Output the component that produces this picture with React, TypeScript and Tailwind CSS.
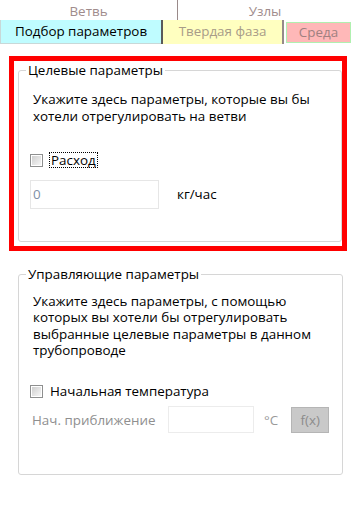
const Checkbox = () => (
    <div className="w-[13px] h-[13px] border border-[#8e8f8f] bg-white p-[1px] shrink-0">
        <div className="w-full h-full bg-gradient-to-br from-[#cfcfcf] to-[#f6f6f6]" />
    </div>
);

const App = () => {
    return (
        <div
            className="w-[352px] h-[507px] bg-white text-[13.4px] text-black overflow-hidden"
            style={{ fontFamily: '"Open Sans", "Noto Sans", sans-serif' }}
        >
            {/* Tabs, upper row */}
            <div className="flex h-[20px] text-[#a08c8c] leading-[22px]">
                <div className="w-[177px] text-center">Ветвь</div>
                <div className="w-[1px] bg-[#9a8a8a]" />
                <div className="flex-1 text-center">Узлы</div>
            </div>

            {/* Tabs, lower row */}
            <div className="flex h-[24px] leading-[22px]">
                <div className="w-[161px] bg-[#bffcff] border-l border-b border-[#c8d8d8] text-center text-black">
                    Подбор параметров
                </div>
                <div className="w-[2px] bg-[#5a5a5a]" />
                <div className="w-[119px] bg-[#ffffc0] text-center text-[#a89c88]">Твердая фаза</div>
                <div className="w-[2px] bg-[#968a8a]" />
                <div className="w-[2px]" />
                <div className="w-[65px] my-[2px] mb-[1px] bg-[#ffb8b8] border border-[#b0f0b0] text-center text-[#a08080] leading-[19px]">
                    Среда
                </div>
            </div>

            {/* Target parameters, highlighted */}
            <div className="mt-[12px] ml-[9px] w-[338px] h-[195px] border-[5px] border-[#ff0000] pl-[4px] pt-[1px]">
                <fieldset className="border border-[#d6d6d6] rounded-[3px] w-[324px] h-[180px] p-0 m-0 min-w-0">
                    <legend className="ml-[7px] px-[2px] leading-[16px]">Целевые параметры</legend>
                    <div className="px-[11px] pt-[13px]">
                        <p className="pl-[3px] leading-[16.5px]">
                            Укажите здесь параметры, которые вы бы
                            <br />
                            хотели отрегулировать на ветви
                        </p>
                        <div className="flex items-center mt-[28px] h-[16px] gap-[6px]">
                            <Checkbox />
                            <span className="border border-dotted border-black px-[1px] leading-[14px]">Расход</span>
                        </div>
                        <div className="flex items-center mt-[12px]">
                            <div className="w-[129px] h-[29px] border border-[#e6e6e6] px-[2px] pt-[3px] text-[#7f8fa6]">
                                0
                            </div>
                            <span className="ml-[18px]">кг/час</span>
                        </div>
                    </div>
                </fieldset>
            </div>

            {/* Control parameters */}
            <fieldset className="mt-[15px] ml-[18px] border border-[#d6d6d6] rounded-[3px] w-[325px] h-[209px] p-0 min-w-0">
                <legend className="ml-[7px] px-[2px] leading-[16px]">Управляющие параметры</legend>
                <div className="px-[11px] pt-[11px]">
                    <p className="pl-[3px] leading-[16.3px]">
                        Укажите здесь параметры, с помощью
                        <br />
                        которых вы хотели бы отрегулировать
                        <br />
                        выбранные целевые параметры в данном
                        <br />
                        трубопроводе
                    </p>
                    <div className="flex items-center mt-[25px] h-[16px] gap-[7px]">
                        <Checkbox />
                        <span>Начальная температура</span>
                    </div>
                    <div className="flex items-center mt-[7px]">
                        <span className="w-[138px] pl-[2px] text-[#8f8f8f]">Нач. приближение</span>
                        <div className="w-[86px] h-[27px] border border-[#ececec]" />
                        <span className="ml-[10px] text-[#9a9a9a]">°C</span>
                        <div className="ml-[13px] w-[38px] h-[26px] bg-[#c9c9c9] border border-[#b5b5b5] flex items-center justify-center text-[#8c8c8c]">
                            f(x)
                        </div>
                    </div>
                </div>
            </fieldset>
        </div>
    );
};

export default App;
